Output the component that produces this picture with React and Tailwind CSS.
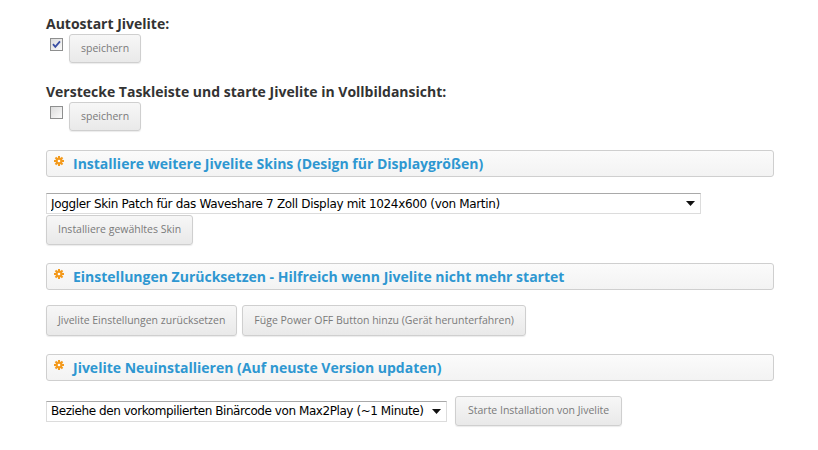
import React, { useState } from "react";

const styles = {
  heading: "text-[14px] font-bold text-[#333] leading-[20px]",
  button:
    "h-[29px] px-[11px] rounded-[3px] border border-[#cfcfcf] bg-gradient-to-b from-[#f7f7f7] to-[#e9e9e9] text-[10.5px] text-[#7a7a7a] shadow-[0_1px_1px_rgba(0,0,0,0.08)] font-['Open_Sans',sans-serif]",
  panel:
    "mr-[44px] h-[27px] flex items-center gap-[9px] pl-[7px] rounded-[3px] border border-[#cfcfcf] bg-gradient-to-b from-[#fbfbfb] to-[#f3f3f3]",
  panelTitle: "text-[14px] font-bold text-[#2e97d1] leading-none",
  select:
    "block appearance-none h-[21px] border border-[#dcdcdc] border-t-[#a9a9a9] bg-white pl-[4px] text-[12px] text-black font-['DejaVu_Sans',sans-serif] outline-none",
};

function Gear() {
  return (
    <svg width="10" height="10" viewBox="0 0 10 10" className="shrink-0 -mt-[6px]">
      <g fill="#f39a1d">
        <rect x="4" y="0" width="2" height="10" />
        <rect x="0" y="4" width="10" height="2" />
        <rect x="4" y="0" width="2" height="10" transform="rotate(45 5 5)" />
        <rect x="0" y="4" width="10" height="2" transform="rotate(45 5 5)" />
        <circle cx="5" cy="5" r="3.4" />
      </g>
      <circle cx="5" cy="5" r="1.3" fill="#fff" />
    </svg>
  );
}

function Panel({ title }) {
  return (
    <div className={styles.panel}>
      <Gear />
      <span className={styles.panelTitle}>{title}</span>
    </div>
  );
}

function Arrow() {
  return (
    <svg width="9" height="5" viewBox="0 0 9 5" className="absolute right-[6px] top-[8px] pointer-events-none">
      <path d="M0 0h9L4.5 5z" fill="#111" />
    </svg>
  );
}

function Checkbox({ checked, onChange }) {
  return (
    <span className="relative w-[13px] h-[13px] -mt-[8px] shrink-0">
      <input
        type="checkbox"
        checked={checked}
        onChange={(e) => onChange(e.target.checked)}
        className="appearance-none block w-[13px] h-[13px] m-0 border border-[#8e8f8f] bg-gradient-to-br from-[#dcdcdc] to-[#fbfbfb]"
      />
      {checked && (
        <svg width="13" height="13" viewBox="0 0 13 13" className="absolute left-0 top-0 pointer-events-none">
          <path d="M3 6.2l2.3 2.6L10 3.3" stroke="#3a4fa3" strokeWidth="1.8" fill="none" />
        </svg>
      )}
    </span>
  );
}

export default function App() {
  const [autostart, setAutostart] = useState(true);
  const [fullscreen, setFullscreen] = useState(false);

  return (
    <div className="w-[818px] h-[450px] bg-white pl-[46px] pt-[14px] font-['Open_Sans',sans-serif]">
      {/* Autostart */}
      <div className={styles.heading}>Autostart Jivelite:</div>
      <div className="flex items-center gap-[6px] pl-[4px]">
        <Checkbox checked={autostart} onChange={setAutostart} />
        <button className={styles.button}>speichern</button>
      </div>

      {/* Vollbild */}
      <div className={styles.heading + " mt-[19px]"}>
        Verstecke Taskleiste und starte Jivelite in Vollbildansicht:
      </div>
      <div className="flex items-center gap-[6px] pl-[4px]">
        <Checkbox checked={fullscreen} onChange={setFullscreen} />
        <button className={styles.button}>speichern</button>
      </div>

      {/* Skins */}
      <div className="mt-[19px]">
        <Panel title="Installiere weitere Jivelite Skins (Design für Displaygrößen)" />
      </div>
      <div className="relative w-[655px] mt-[16px]">
        <select className={styles.select + " w-full pr-[24px] tracking-[-0.33px]"}>
          <option>Joggler Skin Patch für das Waveshare 7 Zoll Display mit 1024x600 (von Martin)</option>
        </select>
        <Arrow />
      </div>
      <button className={styles.button + " h-[30px] mt-[1px]"}>Installiere gewähltes Skin</button>

      {/* Reset */}
      <div className="mt-[18px]">
        <Panel title="Einstellungen Zurücksetzen - Hilfreich wenn Jivelite nicht mehr startet" />
      </div>
      <div className="flex gap-[5px] mt-[15px]">
        <button className={styles.button + " h-[31px]"}>Jivelite Einstellungen zurücksetzen</button>
        <button className={styles.button + " h-[31px]"}>Füge Power OFF Button hinzu (Gerät herunterfahren)</button>
      </div>

      {/* Neuinstallation */}
      <div className="mt-[18px]">
        <Panel title="Jivelite Neuinstallieren (Auf neuste Version updaten)" />
      </div>
      <div className="flex items-center gap-[8px] mt-[15px]">
        <div className="relative w-[401px]">
          <select className={styles.select + " w-full pr-[16px] tracking-[-0.43px]"}>
            <option>Beziehe den vorkompilierten Binärcode von Max2Play (~1 Minute)</option>
          </select>
          <Arrow />
        </div>
        <button className={styles.button + " h-[30px] px-[12px]"}>Starte Installation von Jivelite</button>
      </div>
    </div>
  );
}
